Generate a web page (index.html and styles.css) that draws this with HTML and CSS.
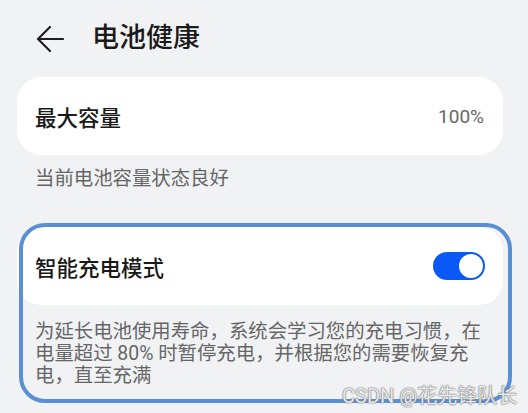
FILE: index.html
```html
<!DOCTYPE html>
<html lang="zh-CN">
<head>
<meta charset="utf-8">
<title>电池健康</title>
<link rel="stylesheet" href="styles.css">
</head>
<body>
<div class="page">
  <header class="header">
    <svg class="back" width="28" height="28" viewBox="0 0 28 28" aria-hidden="true">
      <path d="M27 14H2.5M14 2L2 14l12 12" fill="none" stroke="#1f1f1f" stroke-width="2.2" stroke-linecap="round" stroke-linejoin="round"/>
    </svg>
    <h1 class="title">电池健康</h1>
  </header>

  <div class="card">
    <span class="label">最大容量</span>
    <span class="value">100%</span>
  </div>
  <p class="note">当前电池容量状态良好</p>

  <section class="group">
    <div class="card">
      <span class="label">智能充电模式</span>
      <span class="switch"><span class="knob"></span></span>
    </div>
    <p class="desc">为延长电池使用寿命，系统会学习您的充电习惯，在电量超过 80% 时暂停充电，并根据您的需要恢复充电，直至充满</p>
  </section>

  <div class="watermark">CSDN @花先锋队长</div>
</div>
</body>
</html>
```
FILE: styles.css
```css
* { box-sizing: border-box; }
html, body {
  margin: 0;
  padding: 0;
  background: #f1f2f4;
}
body {
  font-family: Roboto, "Noto Sans CJK SC", sans-serif;
  color: #1a1a1a;
}
.page {
  position: relative;
  width: 528px;
  height: 413px;
  overflow: hidden;
  padding: 0 25px 0 17px;
}
.header {
  height: 77px;
  display: flex;
  align-items: center;
  padding-left: 19px;
}
.back { display: block; margin-right: 28px; }
.title {
  margin: 0;
  font-size: 27px;
  font-weight: 500;
  line-height: 1;
  color: #1a1a1a;
}
.card {
  height: 78px;
  background: #fff;
  border-radius: 24px;
  display: flex;
  align-items: center;
  justify-content: space-between;
  padding: 0 19px 0 18px;
}
.label {
  font-size: 21.5px;
  font-weight: 500;
  color: #1a1a1a;
}
.value {
  font-size: 19px;
  color: #666;
}
.note {
  margin: 0;
  padding: 11px 18px 0;
  height: 72px;
  font-size: 19.4px;
  line-height: 26px;
  color: #666;
}
.group {
  position: relative;
  padding-bottom: 12px;
}
.group::after {
  content: "";
  position: absolute;
  left: 2px;
  right: -9px;
  top: -4px;
  bottom: -4px;
  border: 4px solid #5a8fd3;
  border-radius: 26px;
  pointer-events: none;
}
.group .card { padding-right: 18px; }
.switch {
  width: 52px;
  height: 28px;
  border-radius: 14px;
  background: #0a59f7;
  position: relative;
  display: block;
}
.knob {
  position: absolute;
  right: 2px;
  top: 2px;
  width: 24px;
  height: 24px;
  border-radius: 50%;
  background: #fff;
}
.desc {
  margin: 0;
  padding: 16px 18px 0;
  font-size: 19.4px;
  line-height: 22px;
  color: #666;
}
.watermark {
  position: absolute;
  left: 342px;
  top: 387px;
  font-size: 20px;
  line-height: 18px;
  white-space: nowrap;
  color: rgba(255,255,255,0.85);
  text-shadow: 0 0 1px #777, 0 0 1px #777, 0 0 2px #999;
}
```
